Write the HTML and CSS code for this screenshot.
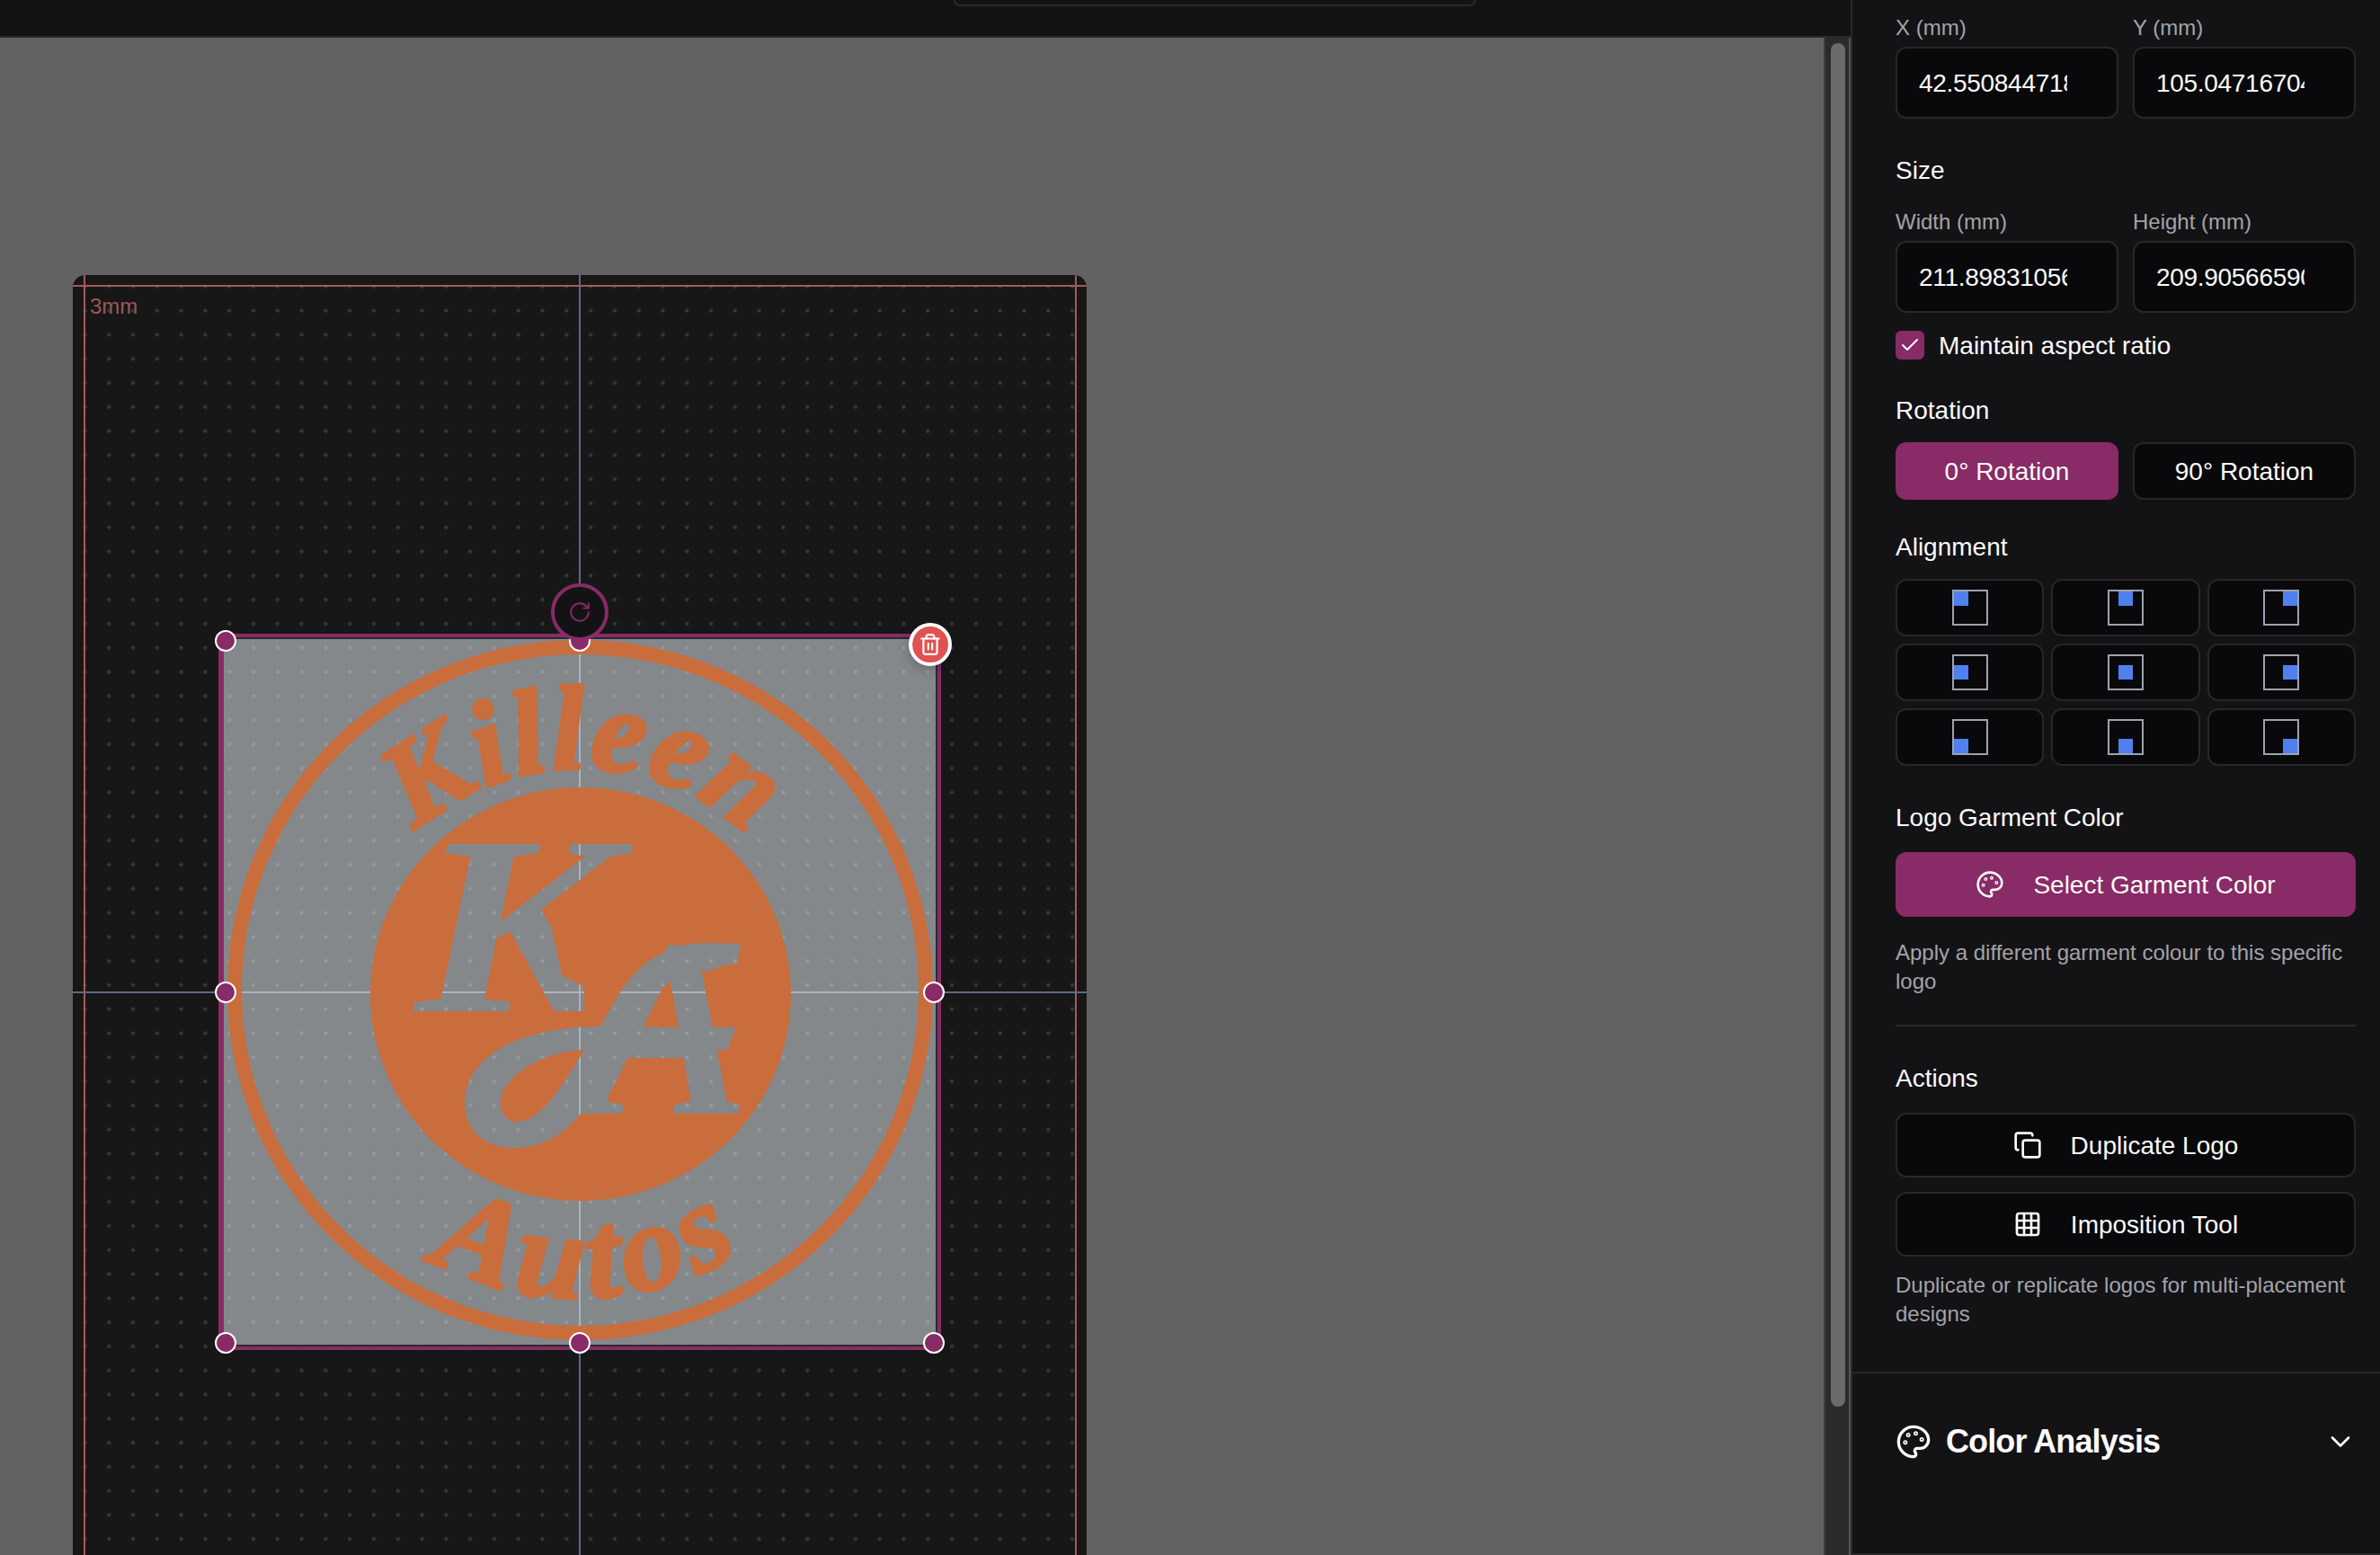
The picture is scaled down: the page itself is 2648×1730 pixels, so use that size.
FILE: index.html
```html
<!DOCTYPE html>
<html lang="en">
<head>
<meta charset="utf-8">
<title>Logo placement editor</title>
<link rel="stylesheet" href="styles.css">
</head>
<body>
<div class="app">
  <main class="main">
    <header class="topbar"><div class="toolbar-tab"></div></header>
    <div class="workspace">
      <div class="stage">
        <div class="garment">
          <div class="bleed bleed-top"></div>
          <div class="bleed bleed-left"></div>
          <div class="bleed bleed-right"></div>
          <span class="bleed-label">3mm</span>
          <div class="guide guide-v"></div>
          <div class="guide guide-h"></div>
          <div class="selection">
            <svg class="logo" viewBox="247 709 796 789" xmlns="http://www.w3.org/2000/svg">
              <defs>
                <mask id="ka-mask" maskUnits="userSpaceOnUse" x="247" y="709" width="796" height="789">
                  <rect x="247" y="709" width="796" height="789" fill="#fff"/>
                  <text class="logo-mono" transform="translate(462 1125) scale(1.18 1)" font-size="284" fill="#000">K</text>
                  <polygon fill="#fff" points="612,1024 625,1085 650,1098 650,1130 730,1130 730,1024"/>
                  <text class="logo-mono" transform="translate(654 1239) scale(.95 1)" font-size="284" fill="#000">A</text>
                  <path fill="#000" fill-rule="evenodd" d="M668 1142 L819 1143 L809 1168 L692 1168 C680 1186 660 1220 645 1240 C625 1265 600 1277 570 1277 C540 1277 517 1258 517 1227 C517 1180 570 1142 668 1142 Z M650 1168 C600 1170 557 1200 557 1227 C557 1240 565 1248 575 1248 C600 1248 625 1210 650 1168 Z"/>
                  <path fill="#000" d="M668 1142 C690 1105 710 1050 790 1049 L824 1050 L820 1072 L805 1074 L790 1080 L760 1084 C735 1095 715 1120 703 1143 Z"/>
                </mask>
                <path id="arc-top" d="M375 1125 A270 270 0 0 1 915 1125"/>
                <path id="arc-bottom" d="M305 1104 A340 340 0 0 0 985 1104"/>
              </defs>
              <ellipse class="logo-ring" cx="645.5" cy="1101.5" rx="384.5" ry="381.5"/>
              <ellipse class="logo-fill" cx="646" cy="1106" rx="234" ry="230" mask="url(#ka-mask)"/>
              <text class="logo-script" font-size="134" letter-spacing="2"><textPath href="#arc-top" startOffset="50.5%" text-anchor="middle">Killeen</textPath></text>
              <text class="logo-script" font-size="138" letter-spacing="8"><textPath href="#arc-bottom" startOffset="51%" text-anchor="middle">Autos</textPath></text>
            </svg>
          </div>
          <span class="handle h-tl"></span>
          <span class="handle h-tc"></span>
          <span class="handle h-ml"></span>
          <span class="handle h-mr"></span>
          <span class="handle h-bl"></span>
          <span class="handle h-bc"></span>
          <span class="handle h-br"></span>
          <button class="rotate-handle" type="button" aria-label="Rotate">
            <svg class="rotate-icon" viewBox="0 0 24 24"><path d="M21 12a9 9 0 1 1-9-9c2.52 0 4.93 1 6.74 2.74L21 8"/><path d="M21 3v5h-5"/></svg>
          </button>
          <button class="delete-handle" type="button" aria-label="Delete">
            <svg class="delete-icon" viewBox="0 0 24 24"><path d="M3 6h18"/><path d="M19 6v14c0 1-1 2-2 2H7c-1 0-2-1-2-2V6"/><path d="M8 6V4c0-1 1-2 2-2h4c1 0 2 1 2 2v2"/><path d="M10 11v6"/><path d="M14 11v6"/></svg>
          </button>
        </div>
      </div>
      <div class="scrollbar"><div class="scroll-thumb"></div></div>
    </div>
  </main>

  <aside class="panel">
    <section class="panel-body">
      <div class="two-col">
        <label class="field"><span class="field-label">X (mm)</span><input class="text-input" type="text" value="42.5508447183"></label>
        <label class="field"><span class="field-label">Y (mm)</span><input class="text-input" type="text" value="105.0471670432"></label>
      </div>

      <h3 class="section-label gap-38">Size</h3>
      <div class="two-col gap-21">
        <label class="field"><span class="field-label">Width (mm)</span><input class="text-input" type="text" value="211.8983105612"></label>
        <label class="field"><span class="field-label">Height (mm)</span><input class="text-input" type="text" value="209.9056659012"></label>
      </div>

      <div class="check-row">
        <span class="checkbox"><svg class="check-icon" viewBox="0 0 24 24"><path d="M20 6 9 17l-5-5"/></svg></span>
        <span class="check-text">Maintain aspect ratio</span>
      </div>

      <h3 class="section-label gap-37">Rotation</h3>
      <div class="two-col gap-15">
        <button class="btn btn-primary btn-sm" type="button"><span class="btn-text">0° Rotation</span></button>
        <button class="btn btn-dark btn-sm" type="button"><span class="btn-text">90° Rotation</span></button>
      </div>

      <h3 class="section-label gap-33">Alignment</h3>
      <div class="align-grid">
        <button class="align-btn" type="button"><span class="align-box top left"><i></i></span></button>
        <button class="align-btn" type="button"><span class="align-box top center"><i></i></span></button>
        <button class="align-btn" type="button"><span class="align-box top right"><i></i></span></button>
        <button class="align-btn" type="button"><span class="align-box middle left"><i></i></span></button>
        <button class="align-btn" type="button"><span class="align-box middle center"><i></i></span></button>
        <button class="align-btn" type="button"><span class="align-box middle right"><i></i></span></button>
        <button class="align-btn" type="button"><span class="align-box bottom left"><i></i></span></button>
        <button class="align-btn" type="button"><span class="align-box bottom center"><i></i></span></button>
        <button class="align-btn" type="button"><span class="align-box bottom right"><i></i></span></button>
      </div>

      <h3 class="section-label gap-38">Logo Garment Color</h3>
      <button class="btn btn-primary btn-lg gap-18" type="button">
        <svg class="btn-icon" viewBox="0 0 24 24"><circle cx="13.5" cy="6.5" r=".5"/><circle cx="17.5" cy="10.5" r=".5"/><circle cx="8.5" cy="7.5" r=".5"/><circle cx="6.5" cy="12.5" r=".5"/><path d="M12 2C6.5 2 2 6.5 2 12s4.5 10 10 10c.926 0 1.648-.746 1.648-1.688 0-.437-.18-.835-.437-1.125-.29-.289-.438-.652-.438-1.125a1.64 1.64 0 0 1 1.668-1.668h1.996c3.051 0 5.555-2.503 5.555-5.554C21.965 6.012 17.461 2 12 2z"/></svg>
        <span class="btn-text">Select Garment Color</span>
      </button>
      <p class="helper gap-24">Apply a different garment colour to this specific logo</p>
      <hr class="divider">

      <h3 class="section-label gap-38">Actions</h3>
      <button class="btn btn-dark btn-lg gap-18" type="button">
        <svg class="btn-icon" viewBox="0 0 24 24"><rect x="8" y="8" width="14" height="14" rx="2"/><path d="M4 16c-1.1 0-2-.9-2-2V4c0-1.1.9-2 2-2h10c1.1 0 2 .9 2 2"/></svg>
        <span class="btn-text">Duplicate Logo</span>
      </button>
      <button class="btn btn-dark btn-lg gap-16" type="button">
        <svg class="btn-icon" viewBox="0 0 24 24"><rect x="3" y="3" width="18" height="18" rx="2"/><path d="M3 9h18"/><path d="M3 15h18"/><path d="M9 3v18"/><path d="M15 3v18"/></svg>
        <span class="btn-text">Imposition Tool</span>
      </button>
      <p class="helper gap-16">Duplicate or replicate logos for multi-placement designs</p>
    </section>

    <section class="panel-footer">
      <div class="accordion-title">
        <svg class="accordion-icon" viewBox="0 0 24 24"><circle cx="13.5" cy="6.5" r=".5"/><circle cx="17.5" cy="10.5" r=".5"/><circle cx="8.5" cy="7.5" r=".5"/><circle cx="6.5" cy="12.5" r=".5"/><path d="M12 2C6.5 2 2 6.5 2 12s4.5 10 10 10c.926 0 1.648-.746 1.648-1.688 0-.437-.18-.835-.437-1.125-.29-.289-.438-.652-.438-1.125a1.64 1.64 0 0 1 1.668-1.668h1.996c3.051 0 5.555-2.503 5.555-5.554C21.965 6.012 17.461 2 12 2z"/></svg>
        <h2 class="accordion-text">Color Analysis</h2>
      </div>
      <svg class="chevron" viewBox="0 0 24 24"><path d="m6 9 6 6 6-6"/></svg>
    </section>
  </aside>
</div>
</body>
</html>
```
FILE: styles.css
```css
* { box-sizing: border-box; }
html, body { margin: 0; height: 100%; overflow: hidden; }
body { background: #131316; color: #fafafa; font-family: "Liberation Sans", Arial, sans-serif; }
h2, h3, p, hr { margin: 0; padding: 0; }

.app { display: flex; width: 2648px; height: 1730px; }
.main { width: 2059px; height: 1730px; display: flex; flex-direction: column; flex: none; }

.topbar { height: 42px; flex: none; background: #131316; border-bottom: 2px solid #2a2a2d; padding-left: 1061px; }
.toolbar-tab { width: 581px; height: 7px; border: 2px solid #2a2a2e; border-top: 0; border-radius: 0 0 12px 12px; }

.workspace { flex: 1; display: flex; min-height: 0; }
.stage { flex: 1; background: #626262; overflow: hidden; padding: 264px 0 0 81px; }
.scrollbar { width: 30px; flex: none; background: #2b2b2b; border-left: 2px solid #3d3d3d; border-right: 2px solid #555; padding: 6px 4px 0 6px; }
.scroll-thumb { width: 16px; height: 1517px; background: #6b6b6b; border-radius: 8px; }

.garment {
  position: relative;
  width: 1128px;
  height: 1500px;
  background-color: #171717;
  background-image: radial-gradient(circle, #3b3c41 0, #35363b 1.4px, rgba(53,54,59,0) 2.8px);
  background-size: 26.8px 26.8px;
  background-position: 0 -0.6px;
  border-radius: 14px 14px 0 0;
  overflow: hidden;
}

.bleed { position: absolute; background: #a65a5a; }
.bleed-top { left: 0; right: 0; top: 11px; height: 2px; }
.bleed-left { left: 12px; top: 0; bottom: 0; width: 2px; }
.bleed-right { right: 11px; top: 0; bottom: 0; width: 2px; }
.bleed-label { position: absolute; left: 19px; top: 21px; font-size: 24px; line-height: 28px; color: #9e5757; }

.guide { position: absolute; background: #5c6b85; }
.guide-v { left: 563px; top: 0; bottom: 0; width: 2px; }
.guide-h { left: 0; right: 0; top: 797px; height: 2px; }

.selection {
  position: absolute;
  left: 162px;
  top: 399px;
  width: 804px;
  height: 797px;
  border: 4px solid #882b66;
  background: rgba(243, 249, 253, .5);
  box-shadow: inset 2px 0 0 #882b66, inset -2px -2px 0 #2a2a2e, inset 0 2px 0 #2a2a2e;
}
.logo { position: absolute; inset: 0; width: 796px; height: 789px; display: block; }
.logo-ring { fill: none; stroke: #c96d3c; stroke-width: 16; }
.logo-fill { fill: #c96d3c; }
.logo-mono { font-family: "Liberation Serif", serif; font-weight: 700; font-style: italic; }
.logo-script { font-family: "Liberation Serif", serif; font-weight: 700; font-style: italic; fill: #c96d3c; stroke: #c96d3c; stroke-width: 4; stroke-linejoin: round; }

.handle { position: absolute; width: 24px; height: 24px; border-radius: 50%; background: #882b66; border: 2px solid #fff; }
.h-tl { left: 158px; top: 395px; }
.h-tc { left: 552px; top: 395px; }
.h-ml { left: 158px; top: 786px; }
.h-mr { left: 946px; top: 786px; }
.h-bl { left: 158px; top: 1176px; }
.h-bc { left: 552px; top: 1176px; }
.h-br { left: 946px; top: 1176px; }

.rotate-handle {
  position: absolute; left: 532px; top: 343px; width: 64px; height: 64px; padding: 0;
  display: flex; align-items: center; justify-content: center;
  background: #131316; border: 4px solid #882b66; border-radius: 50%;
}
.rotate-icon { width: 26px; height: 26px; fill: none; stroke: #882b66; stroke-width: 1.7; stroke-linecap: round; stroke-linejoin: round; }

.delete-handle {
  position: absolute; left: 930px; top: 387px; width: 48px; height: 48px; padding: 0;
  display: flex; align-items: center; justify-content: center;
  background: #e05252; border: 4px solid #fff; border-radius: 50%;
  box-shadow: 0 4px 14px rgba(0,0,0,.22);
}
.delete-icon { width: 26px; height: 26px; fill: none; stroke: #fff; stroke-width: 2; stroke-linecap: round; stroke-linejoin: round; }

.panel { width: 589px; height: 1730px; flex: none; background: #131316; border-left: 2px solid #2a2a2e; display: flex; flex-direction: column; }
.panel-body { padding: 15px 27px 48px 48px; }
.panel-footer {
  flex: 1; border-top: 2px solid #27272a; border-bottom: 2px solid #27272a;
  padding: 56px 26px 0 48px; display: flex; justify-content: space-between; align-items: flex-start;
}

.two-col { display: grid; grid-template-columns: 248px 248px; column-gap: 16px; }
.field { display: block; }
.field-label { display: block; font-size: 24px; line-height: 32px; color: #a3a3a8; margin-bottom: 5px; }
.text-input {
  display: block; width: 248px; height: 80px; padding: 1px 55px 0 24px;
  background: #09090b; border: 2px solid #27272a; border-radius: 12px; color: #fafafa;
  font-family: "Liberation Sans", Arial, sans-serif; font-size: 28px; letter-spacing: -0.3px; outline: none;
}

.section-label { font-size: 28px; line-height: 40px; font-weight: 400; color: #fafafa; }
.gap-38 { margin-top: 38px; }
.gap-21 { margin-top: 21px; }
.gap-37 { margin-top: 37px; }
.gap-33 { margin-top: 33px; }
.gap-15 { margin-top: 15px; }
.gap-16 { margin-top: 16px; }
.gap-18 { margin-top: 18px; }
.gap-24 { margin-top: 24px; }

.check-row { display: flex; align-items: center; gap: 16px; height: 32px; margin-top: 20px; }
.checkbox { width: 32px; height: 32px; border-radius: 6px; background: #882b66; display: flex; align-items: center; justify-content: center; }
.check-icon { width: 24px; height: 24px; fill: none; stroke: #fff; stroke-width: 2; stroke-linecap: round; stroke-linejoin: round; }
.check-text { font-size: 28px; line-height: 40px; padding-top: 2px; }

.btn {
  display: flex; align-items: center; justify-content: center; gap: 32px; width: 100%;
  font-family: "Liberation Sans", Arial, sans-serif; font-size: 28px; color: #fafafa; border-radius: 12px; padding: 0;
}
.btn-text { padding-top: 1px; }
.btn-sm { height: 64px; }
.btn-lg { height: 72px; }
.btn-primary { background: #882b66; border: 0; }
.btn-dark { background: #09090b; border: 2px solid #27272a; }
.btn-icon { width: 32px; height: 32px; flex: none; fill: none; stroke: currentColor; stroke-width: 2; stroke-linecap: round; stroke-linejoin: round; }

.align-grid { display: grid; grid-template-columns: repeat(3, 1fr); gap: 8px; margin-top: 15px; }
.align-btn { height: 64px; padding: 0; display: flex; align-items: center; justify-content: center; background: #09090b; border: 2px solid #27272a; border-radius: 12px; }
.align-box { width: 40px; height: 40px; border: 2px solid #9ca3af; display: flex; }
.align-box i { display: block; width: 16px; height: 16px; background: #4f80ee; }
.top { align-items: flex-start; }
.middle { align-items: center; }
.bottom { align-items: flex-end; }
.left { justify-content: flex-start; }
.center { justify-content: center; }
.right { justify-content: flex-end; }

.helper { font-size: 24px; line-height: 32px; color: #a3a3a8; }
.divider { border: 0; height: 2px; background: #27272a; margin-top: 32px; }

.accordion-title { display: flex; align-items: center; gap: 16px; height: 40px; }
.accordion-icon { width: 40px; height: 40px; flex: none; fill: none; stroke: #fafafa; stroke-width: 2; stroke-linecap: round; stroke-linejoin: round; }
.accordion-text { font-size: 36px; line-height: 40px; font-weight: 700; letter-spacing: -0.9px; }
.chevron { width: 36px; height: 36px; margin-top: 2px; fill: none; stroke: #fafafa; stroke-width: 1.8; stroke-linecap: round; stroke-linejoin: round; }
```
